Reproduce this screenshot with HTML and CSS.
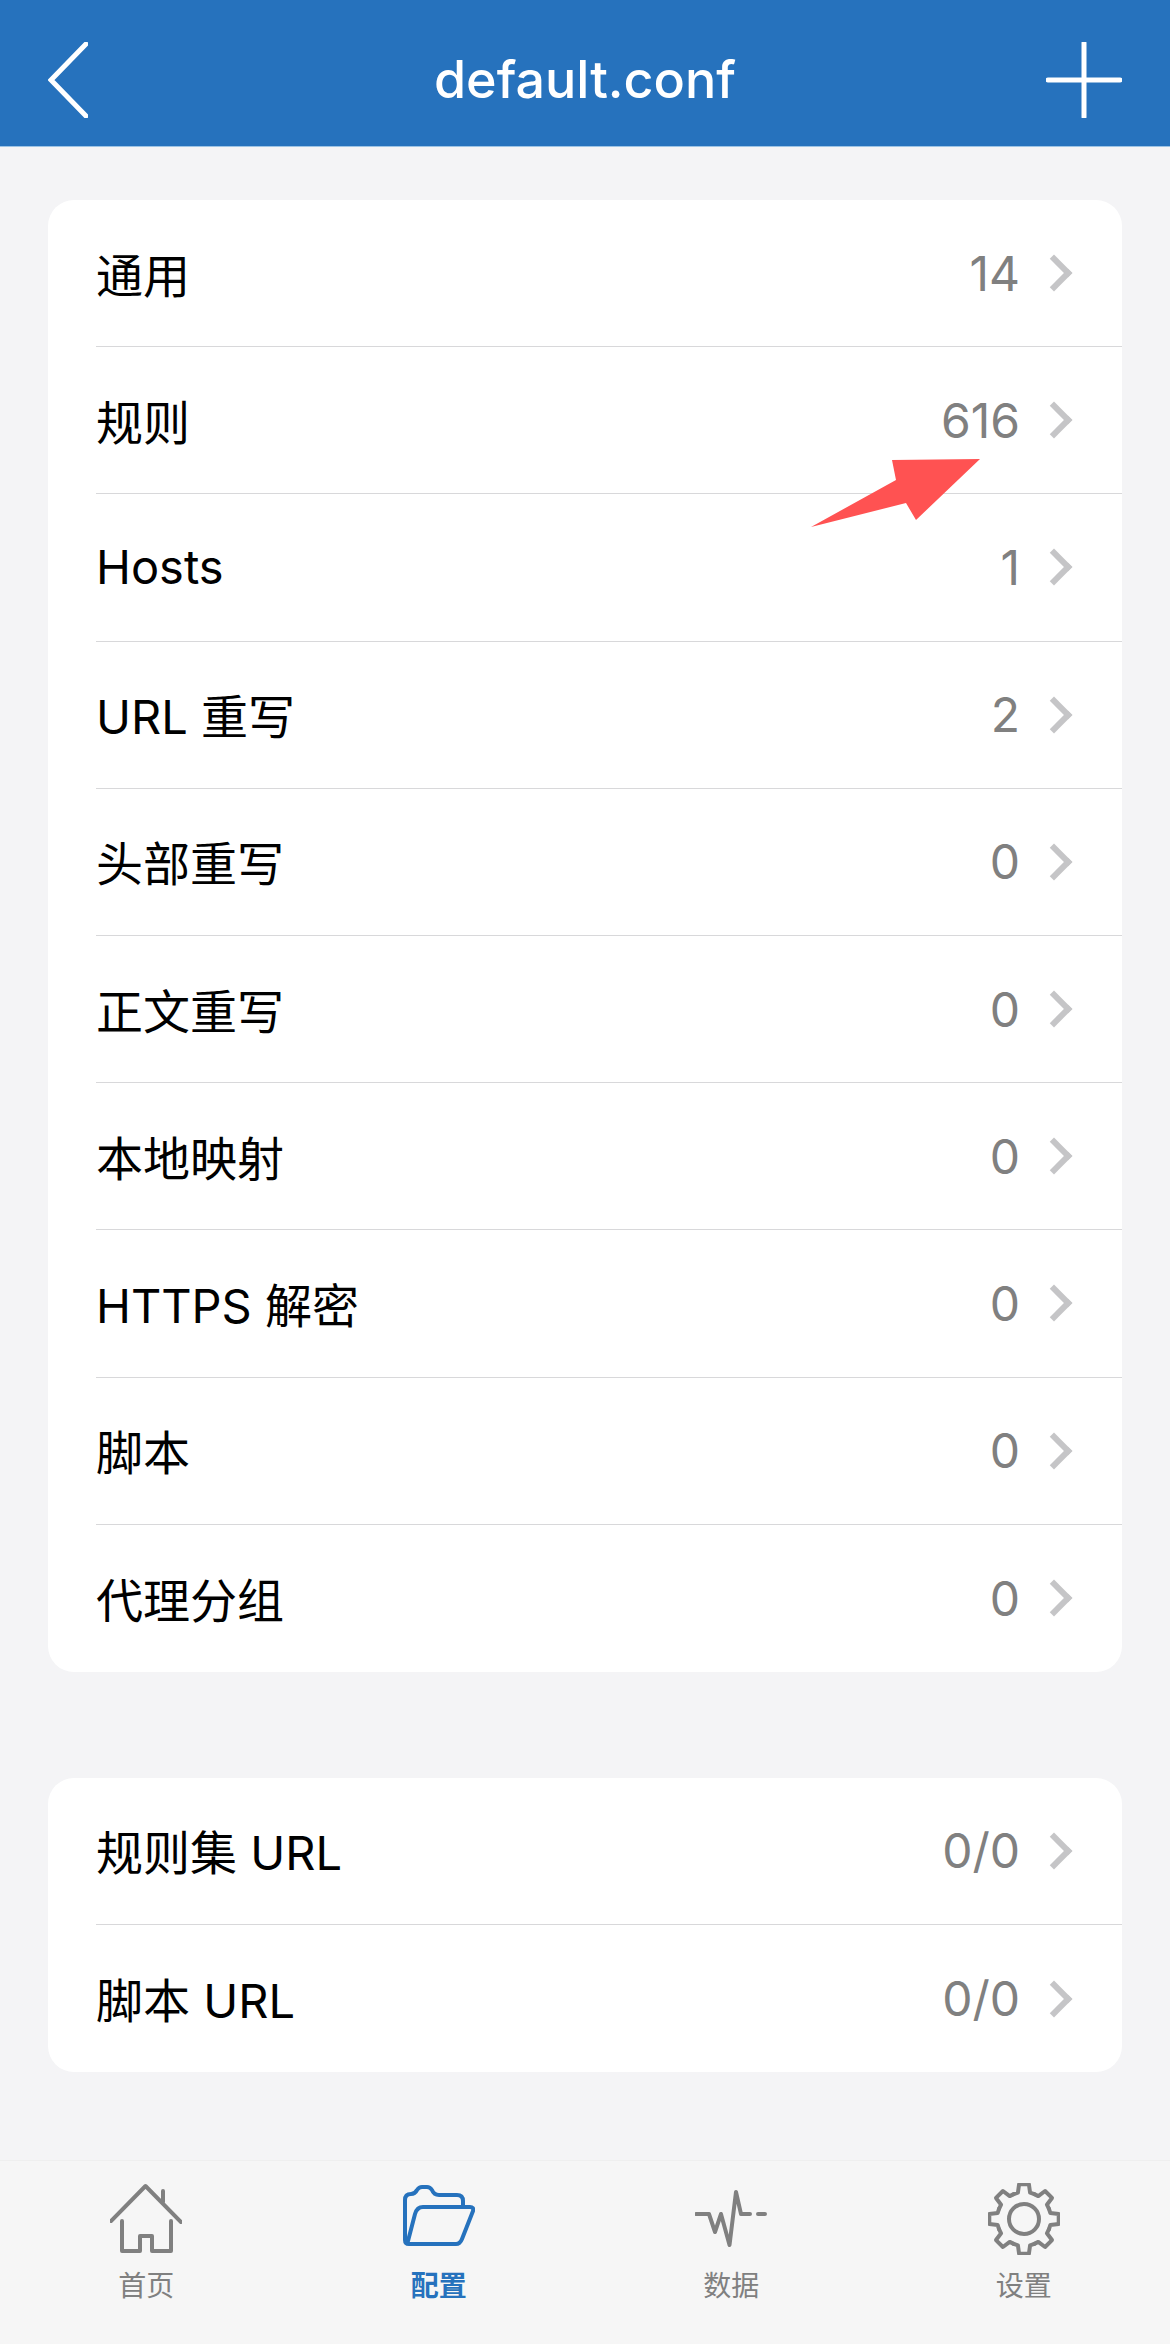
FILE: index.html
```html
<!DOCTYPE html>
<html lang="zh-CN">
<head>
    <meta charset="UTF-8">
    <meta name="viewport" content="width=device-width, initial-scale=1.0">
    <title>default.conf</title>
    <link rel="stylesheet" href="styles.css">
</head>
<body>
    <header class="topbar">
        <svg class="back-icon" viewBox="0 0 40 76"><polyline points="38,2 3,38 38,74"/></svg>
        <h1>default.conf</h1>
        <svg class="add-icon" viewBox="0 0 76 76"><path d="M38 1V75M2 38H74"/></svg>
    </header>

    <main class="content">
        <section class="card">
            <div class="row"><span class="name">通用</span><span class="count">14</span><i class="chev"></i></div>
            <div class="row"><span class="name">规则</span><span class="count">616</span><i class="chev"></i>
                <svg class="arrow" viewBox="0 0 170 70"><polygon points="169,0 81,1 85,21 0,68 95,44 105,61"/></svg>
            </div>
            <div class="row"><span class="name">Hosts</span><span class="count">1</span><i class="chev"></i></div>
            <div class="row"><span class="name">URL 重写</span><span class="count">2</span><i class="chev"></i></div>
            <div class="row"><span class="name">头部重写</span><span class="count">0</span><i class="chev"></i></div>
            <div class="row"><span class="name">正文重写</span><span class="count">0</span><i class="chev"></i></div>
            <div class="row"><span class="name">本地映射</span><span class="count">0</span><i class="chev"></i></div>
            <div class="row"><span class="name">HTTPS 解密</span><span class="count">0</span><i class="chev"></i></div>
            <div class="row"><span class="name">脚本</span><span class="count">0</span><i class="chev"></i></div>
            <div class="row"><span class="name">代理分组</span><span class="count">0</span><i class="chev"></i></div>
        </section>

        <section class="card card-urls">
            <div class="row"><span class="name">规则集 URL</span><span class="count">0/0</span><i class="chev"></i></div>
            <div class="row"><span class="name">脚本 URL</span><span class="count">0/0</span><i class="chev"></i></div>
        </section>
    </main>

    <nav class="tabbar">
        <div class="tab">
            <svg class="tab-icon" viewBox="0 0 72 72"><path d="M1 38L35.500 3L71 39M53 8V19M12 38V68H30V53H42V68H61V38"/></svg>
            <span>首页</span>
        </div>
        <div class="tab active">
            <svg class="tab-icon" viewBox="0 0 72 72"><path d="M2 17Q2 11 8 11Q12 11 14 7Q16 4 19 4H24Q27 4 29 7Q31 12 36 12H54Q60 12 60 18V23M5 58L12 31Q14 24 20 24H67Q71 24 70 28L59 56Q57 61 53 61H6Q2 61 2 57V17"/></svg>
            <span>配置</span>
        </div>
        <div class="tab">
            <svg class="tab-icon" viewBox="0 0 72 72"><path d="M1 31H14L20 49L26 31L34.500 62L41 9L46 31H55M63 31H70"/></svg>
            <span>数据</span>
        </div>
        <div class="tab">
            <svg class="tab-icon" viewBox="0 0 72 72">
                <defs><path id="tooth" d="M25.700 11.100L29.900 9.700L31.100 1.300H40.900L42.100 9.700L46.300 11.100"/></defs>
                <use href="#tooth"/>
                <use href="#tooth" transform="rotate(45 36 36)"/>
                <use href="#tooth" transform="rotate(90 36 36)"/>
                <use href="#tooth" transform="rotate(135 36 36)"/>
                <use href="#tooth" transform="rotate(180 36 36)"/>
                <use href="#tooth" transform="rotate(225 36 36)"/>
                <use href="#tooth" transform="rotate(270 36 36)"/>
                <use href="#tooth" transform="rotate(315 36 36)"/>
                <circle cx="36" cy="36" r="15"/>
            </svg>
            <span>设置</span>
        </div>
    </nav>
</body>
</html>
```

FILE: styles.css
```css
body {
    margin: 0;
    width: 1170px;
    height: 2344px;
    display: flex;
    flex-direction: column;
    background: #f4f4f6;
    font-family: Inter, "Noto Sans CJK SC", sans-serif;
    color: #000;
}
.topbar {
    flex-shrink: 0;
    height: 146px;
    box-sizing: content-box;
    padding: 0 48px;
    display: grid;
    grid-template-columns: 1fr auto 1fr;
    align-items: end;
    background: #2672bd;
    border-bottom: 1px solid #9cc4e6;
}
.topbar h1 {
    margin: 0 0 28px;
    font-size: 52px;
    line-height: 76px;
    font-weight: 500;
    color: #fff;
}
.back-icon {
    width: 40px;
    height: 76px;
    margin-bottom: 28px;
    fill: none;
    stroke: #fff;
    stroke-width: 5;
    stroke-linecap: round;
}
.add-icon {
    justify-self: end;
    width: 76px;
    height: 76px;
    margin-bottom: 28px;
    fill: none;
    stroke: #fff;
    stroke-width: 5;
    stroke-linecap: round;
}
.content {
    flex: 1;
    padding: 53px 48px 0;
}
.card {
    background: #fff;
    border-radius: 26px;
    padding-left: 48px;
}
.card-urls {
    margin-top: 106px;
}
.row {
    position: relative;
    height: 147.200px;
    box-sizing: border-box;
    padding-right: 55px;
    display: flex;
    align-items: center;
    border-bottom: 1px solid #d8d8da;
    font-size: 47px;
}
.row:last-child {
    border-bottom: none;
}
.name {
    flex: 1;
    margin-top: -2px;
}
.count {
    color: #808080;
    font-size: 48px;
    font-weight: 400;
    margin-right: 21px;
}
.chev {
    width: 26px;
    height: 26px;
    box-sizing: border-box;
    border-top: 6px solid #c5c5c7;
    border-right: 6px solid #c5c5c7;
    transform: rotate(45deg);
}
.arrow {
    position: absolute;
    right: 141px;
    top: 112px;
    width: 170px;
    height: 70px;
    fill: #ff5252;
}
.tabbar {
    flex-shrink: 0;
    height: 183px;
    display: grid;
    grid-template-columns: repeat(4, 1fr);
    background: #f6f6f6;
    border-top: 1px solid #efefef;
}
.tab {
    display: flex;
    flex-direction: column;
    align-items: center;
    padding-top: 22px;
    color: #808080;
    font-size: 28px;
    line-height: 36px;
}
.tab span {
    margin-top: 13px;
}
.tab-icon {
    width: 72px;
    height: 72px;
    fill: none;
    stroke: #808080;
    stroke-width: 4;
    stroke-linecap: round;
    stroke-linejoin: round;
}
.active {
    color: #2672bd;
    font-weight: 700;
}
.active .tab-icon {
    stroke: #2672bd;
}
```
